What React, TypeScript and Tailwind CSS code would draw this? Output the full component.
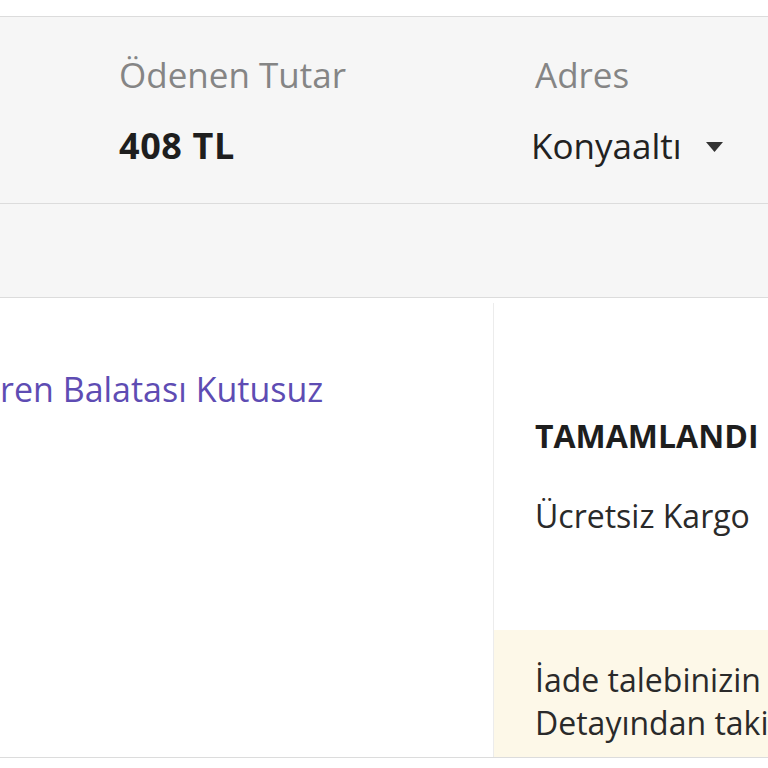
import React from "react";

export default function App() {
  const font = { fontFamily: '"Open Sans", "Noto Sans", Arial, sans-serif' };
  return (
    <div className="w-[768px] h-[768px] overflow-hidden bg-white" style={font}>
      <div className="h-[17px] border-b border-[#dcdcdc]" />
      <div className="h-[187px] bg-[#f6f6f6] border-b border-[#dcdcdc] flex pl-[119px] pt-[38px]">
        <div className="w-[416px] shrink-0 flex flex-col">
          <div className="text-[35px] leading-[40px] text-[#858585] whitespace-nowrap">Ödenen Tutar</div>
          <div className="mt-[31px] text-[36px] leading-[40px] font-bold tracking-[0.6px] text-[#1e1e1e] whitespace-nowrap">408 TL</div>
        </div>
        <div className="flex flex-col">
          <div className="text-[35px] leading-[40px] text-[#858585] whitespace-nowrap">Adres</div>
          <div className="mt-[31px] -ml-[4px] flex items-center text-[35px] leading-[40px] text-[#222] whitespace-nowrap">
            <span>Konyaaltı</span>
            <svg className="ml-[24px] mt-[2px]" width="17" height="10" viewBox="0 0 17 10">
              <path d="M0 0 L17 0 L8.5 10 Z" fill="#333" />
            </svg>
          </div>
        </div>
      </div>
      <div className="h-[94px] bg-[#f6f6f6] border-b border-[#dcdcdc]" />
      <div className="h-[460px] border-b border-[#dcdcdc] flex">
        <div className="w-[493px] shrink-0 pt-[71px]">
          <div className="text-[34px] leading-[40px] text-[#5e4cb3] whitespace-nowrap">ren Balatası Kutusuz</div>
        </div>
        <div className="mt-[5px] flex-1 min-w-0 border-l border-[#ececec] flex flex-col">
          <div className="pl-[41px] pt-[113px] text-[32px] leading-[40px] font-bold text-[#1e1e1e] whitespace-nowrap">TAMAMLANDI</div>
          <div className="pl-[41px] mt-[40px] text-[32px] leading-[40px] text-[#2a2a2a] whitespace-nowrap">Ücretsiz Kargo</div>
          <div className="mt-auto h-[127px] bg-[#fdf8e8] pl-[41px] pt-[28px] text-[32px] leading-[43px] text-[#2a2a2a] whitespace-nowrap overflow-hidden">
            <div>İade talebinizin</div>
            <div>Detayından takip</div>
          </div>
        </div>
      </div>
    </div>
  );
}
